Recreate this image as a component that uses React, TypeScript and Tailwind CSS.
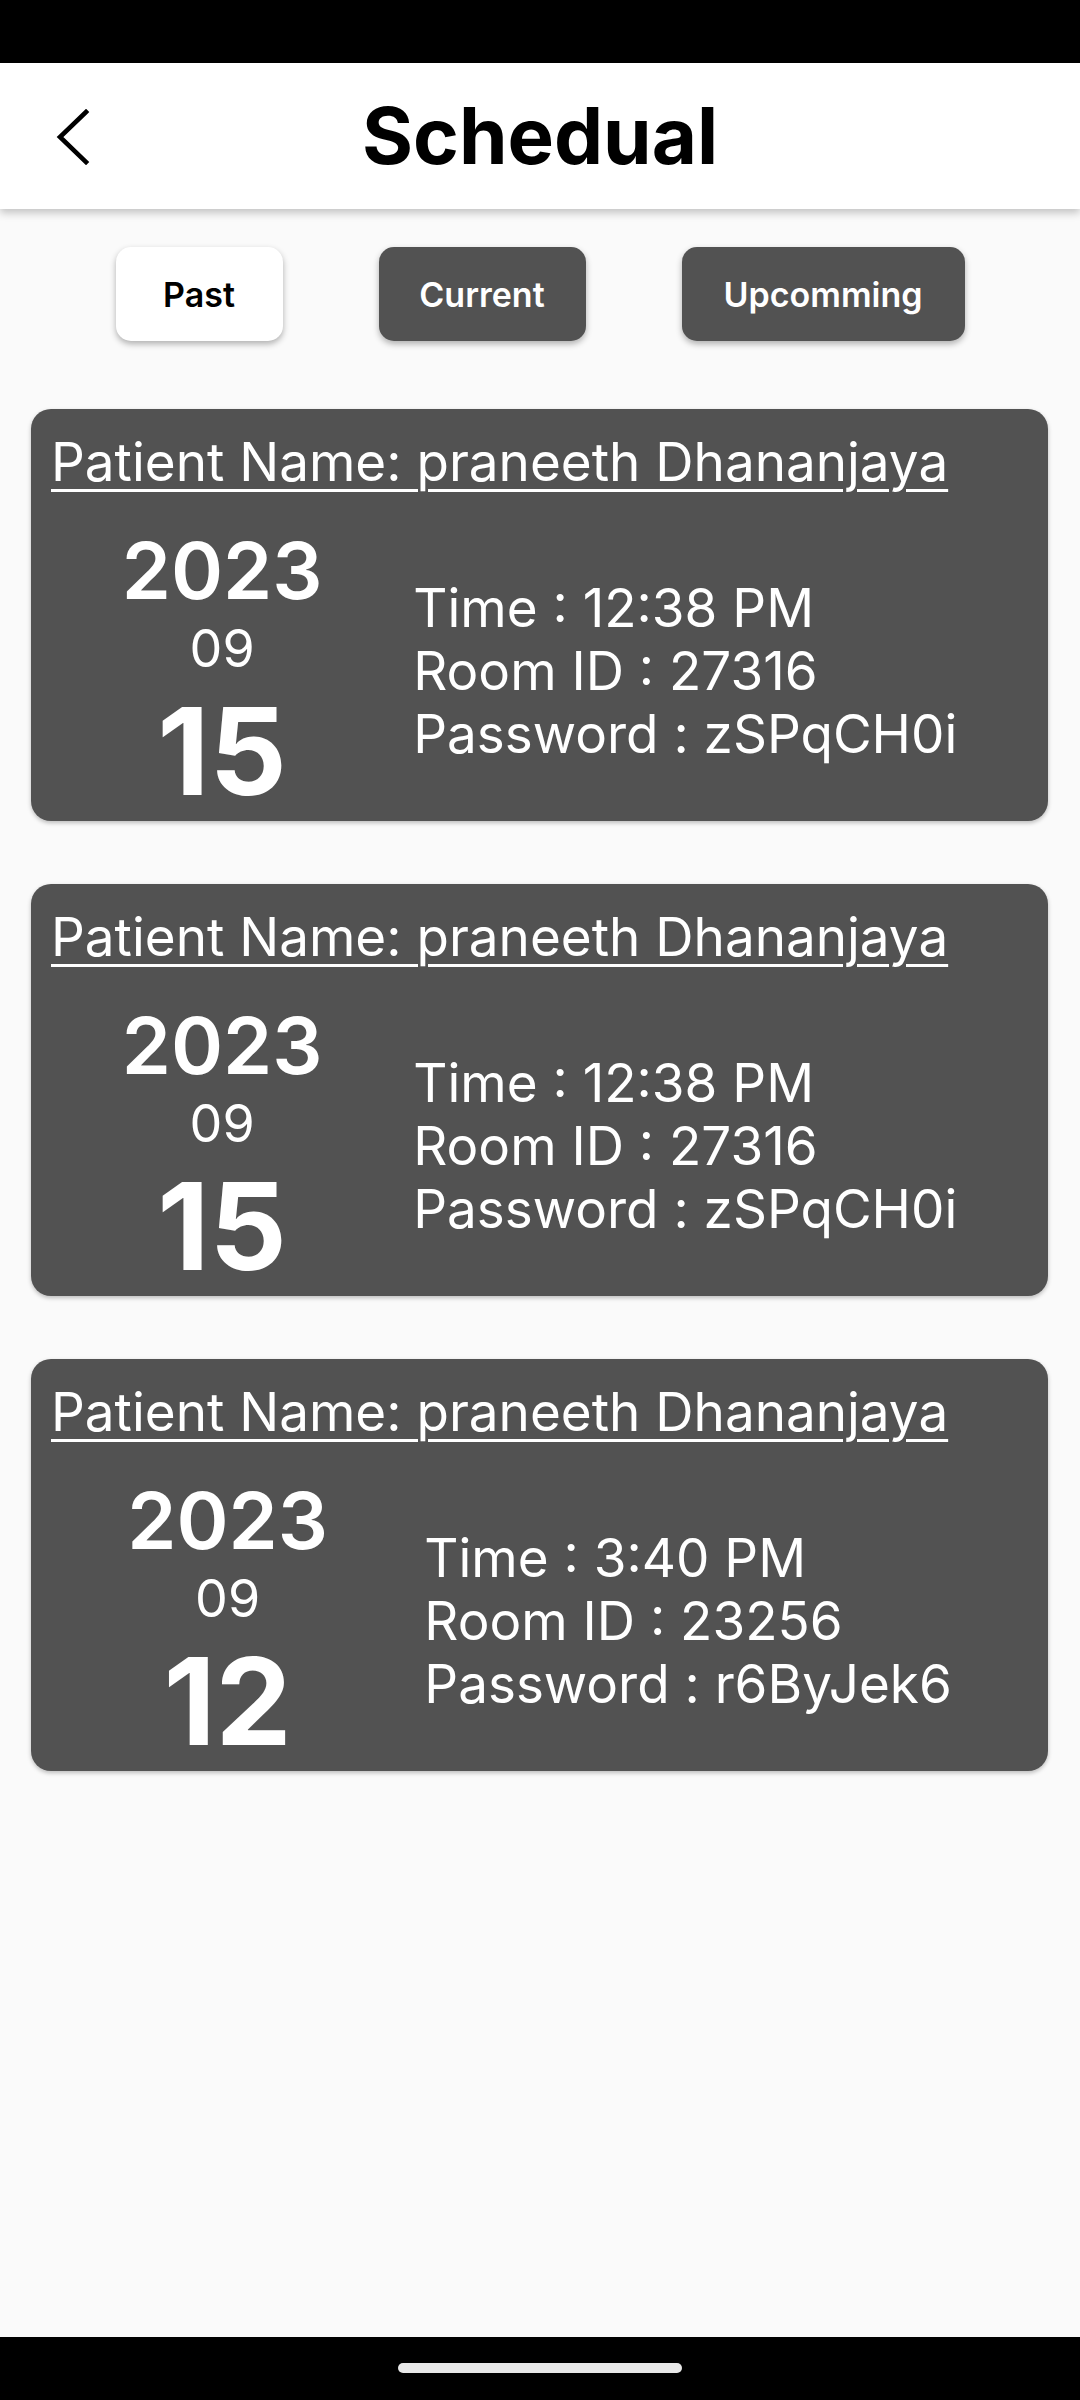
import React from "react";

type Appt = { year: string; month: string; day: string; time: string; room: string; pass: string };

const appts: Appt[] = [
  { year: "2023", month: "09", day: "15", time: "12:38 PM", room: "27316", pass: "zSPqCH0i" },
  { year: "2023", month: "09", day: "15", time: "12:38 PM", room: "27316", pass: "zSPqCH0i" },
  { year: "2023", month: "09", day: "12", time: "3:40 PM", room: "23256", pass: "r6ByJek6" },
];

function Card({ a }: { a: Appt }) {
  return (
    <div className="rounded-[20px] bg-[#525252] pt-[24px] pb-[10px] text-white shadow-[0_2px_4px_rgba(0,0,0,0.25)]">
      <div className="pl-[20px] text-[53px] leading-[58px] underline decoration-[3px] underline-offset-[8px] whitespace-nowrap">
        Patient Name: praneeth Dhananjaya
      </div>
      <div className="mt-[40px] flex items-center justify-evenly">
        <div className="flex flex-col items-center">
          <div className="text-[79px] font-semibold leading-[78px]">{a.year}</div>
          <div className="mt-[14px] text-[52px] leading-[52px]">{a.month}</div>
          <div className="mt-[16px] text-[121px] font-bold leading-[120px]">{a.day}</div>
        </div>
        <div className="flex flex-col text-[53px] leading-[63px] whitespace-nowrap">
          <div>Time : {a.time}</div>
          <div>Room ID : {a.room}</div>
          <div>Password : {a.pass}</div>
        </div>
      </div>
    </div>
  );
}

export default function App() {
  return (
    <div
      className="flex h-[2400px] w-[1080px] flex-col bg-[#fafafa]"
      style={{ fontFamily: "Inter, 'Noto Sans', sans-serif" }}
    >
      <div className="h-[63px] shrink-0 bg-black" />
      <div className="relative z-10 flex h-[146px] shrink-0 items-center justify-center bg-white shadow-[0_4px_8px_rgba(0,0,0,0.22)]">
        <svg
          className="absolute left-[49px] top-[46px]"
          width="46"
          height="56"
          viewBox="0 0 46 56"
          fill="none"
        >
          <polyline points="37,3 11,28 37,53" stroke="black" strokeWidth="4.6" strokeLinecap="square" strokeLinejoin="miter" />
        </svg>
        <div className="text-[78px] font-bold leading-none text-black">Schedual</div>
      </div>
      <div className="flex flex-1 flex-col">
        <div className="mt-[38px] flex justify-center gap-[96px]">
          <button className="flex h-[94px] w-[167px] items-center justify-center rounded-[15px] bg-white text-[34px] font-semibold text-black shadow-[0_3px_6px_rgba(0,0,0,0.3)]">
            Past
          </button>
          <button className="flex h-[94px] w-[207px] items-center justify-center rounded-[15px] bg-[#525252] text-[34px] font-semibold text-white shadow-[0_3px_6px_rgba(0,0,0,0.3)]">
            Current
          </button>
          <button className="flex h-[94px] w-[283px] items-center justify-center rounded-[15px] bg-[#525252] text-[34px] font-semibold text-white shadow-[0_3px_6px_rgba(0,0,0,0.3)]">
            Upcomming
          </button>
        </div>
        <div className="mt-[68px] flex flex-col gap-[63px] pl-[31px] pr-[32px]">
          {appts.map((a, i) => (
            <Card key={i} a={a} />
          ))}
        </div>
      </div>
      <div className="flex h-[63px] shrink-0 items-start justify-center bg-black pt-[26px]">
        <div className="h-[10px] w-[284px] rounded-full bg-[#e8e8e8]" />
      </div>
    </div>
  );
}
